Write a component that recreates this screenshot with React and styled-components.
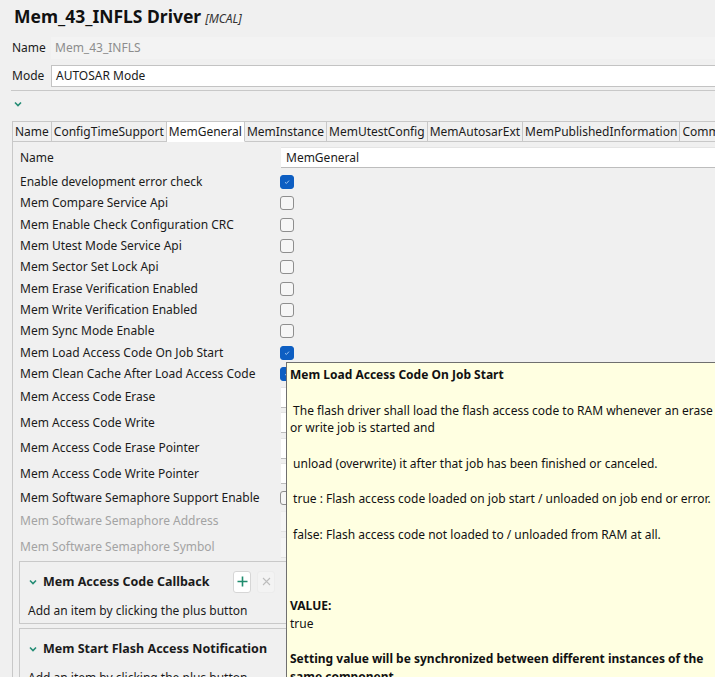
import React from "react";
import styled, { createGlobalStyle } from "styled-components";

const GlobalStyle = createGlobalStyle`
  html, body {
    margin: 0;
    padding: 0;
    background: #f0f0f0;
  }
  body {
    font-family: "Noto Sans", "Open Sans", sans-serif;
    font-size: 12px;
    color: #1b1b1b;
  }
`;

const tabs = [
  "Name",
  "ConfigTimeSupport",
  "MemGeneral",
  "MemInstance",
  "MemUtestConfig",
  "MemAutosarExt",
  "MemPublishedInformation",
  "Common",
];

const CHECK_H = 64 / 3;
const TEXT_H = 25.6;

const rows = [
  { label: "Name", kind: "name", value: "MemGeneral", h: 24 },
  { label: "Enable development error check", kind: "check", checked: true, h: CHECK_H },
  { label: "Mem Compare Service Api", kind: "check", h: CHECK_H },
  { label: "Mem Enable Check Configuration CRC", kind: "check", h: CHECK_H },
  { label: "Mem Utest Mode Service Api", kind: "check", h: CHECK_H },
  { label: "Mem Sector Set Lock Api", kind: "check", h: CHECK_H },
  { label: "Mem Erase Verification Enabled", kind: "check", h: CHECK_H },
  { label: "Mem Write Verification Enabled", kind: "check", h: CHECK_H },
  { label: "Mem Sync Mode Enable", kind: "check", h: CHECK_H },
  { label: "Mem Load Access Code On Job Start", kind: "check", checked: true, h: CHECK_H },
  { label: "Mem Clean Cache After Load Access Code", kind: "check", checked: true, h: CHECK_H },
  { label: "Mem Access Code Erase", kind: "text", h: TEXT_H },
  { label: "Mem Access Code Write", kind: "text", h: TEXT_H },
  { label: "Mem Access Code Erase Pointer", kind: "text", h: TEXT_H },
  { label: "Mem Access Code Write Pointer", kind: "text", h: TEXT_H },
  { label: "Mem Software Semaphore Support Enable", kind: "check", h: 22 },
  { label: "Mem Software Semaphore Address", kind: "text", disabled: true, h: TEXT_H },
  { label: "Mem Software Semaphore Symbol", kind: "text", disabled: true, h: TEXT_H },
];

const tipLines = [
  { text: "Mem Load Access Code On Job Start", bold: true },
  { text: "" },
  { text: " The flash driver shall load the flash access code to RAM whenever an erase" },
  { text: "or write job is started and" },
  { text: "" },
  { text: " unload (overwrite) it after that job has been finished or canceled." },
  { text: "" },
  { text: " true : Flash access code loaded on job start / unloaded on job end or error." },
  { text: "" },
  { text: " false: Flash access code not loaded to / unloaded from RAM at all." },
  { text: "" },
  { text: "" },
  { text: "" },
  { text: "VALUE:", bold: true },
  { text: "true" },
  { text: "" },
  { text: "Setting value will be synchronized between different instances of the", bold: true },
  { text: "same component.", bold: true },
];

const Page = styled.div`
  position: relative;
  width: 715px;
  height: 677px;
  overflow: hidden;
  background: #f0f0f0;
`;

const Header = styled.div`
  height: 37px;
  display: flex;
  align-items: baseline;
  gap: 4px;
  padding: 3px 0 0 14px;
  box-sizing: border-box;
`;

const Title = styled.h1`
  margin: 0;
  font-size: 17.5px;
  line-height: 26px;
  font-weight: 700;
  color: #111;
`;

const Tag = styled.span`
  font-size: 12px;
  font-style: italic;
  color: #333;
`;

const FieldRow = styled.div`
  display: grid;
  grid-template-columns: 39px 1fr;
  align-items: center;
  height: 22px;
  padding-left: 12px;
  margin-bottom: ${(p) => p.$gap || 0}px;
`;

const FieldLabel = styled.span`
  line-height: 22px;
`;

const ReadOnly = styled.div`
  height: 22px;
  line-height: 22px;
  padding-left: 4px;
  background: #f3f3f3;
  color: #8d8d8d;
`;

const ModeInput = styled.div`
  height: 22px;
  box-sizing: border-box;
  line-height: 20px;
  padding-left: 4px;
  background: #fff;
  border: 1px solid #c3c3c3;
  border-right: none;
`;

const Divider = styled.div`
  height: 1px;
  margin: 3px 0 0 11px;
  background: #c8c8c8;
`;

const Collapser = styled.div`
  height: 30px;
  padding: 10px 0 0 14px;
  box-sizing: border-box;
  display: flex;
  align-items: flex-start;
`;

const TabStrip = styled.div`
  display: flex;
  margin-left: 12px;
  height: 21px;
  white-space: nowrap;
`;

const Tab = styled.div`
  flex: none;
  padding: 0 2px;
  line-height: 19px;
  border: 1px solid #c8c8c8;
  border-left: ${(p) => (p.$first ? "1px solid #c8c8c8" : "none")};
  border-bottom-color: ${(p) => (p.$active ? "#fff" : "#c8c8c8")};
  background: ${(p) => (p.$active ? "#fff" : "#f0f0f0")};
`;

const TabPanel = styled.div`
  margin-left: 12px;
  border-left: 1px solid #c8c8c8;
  padding: 5px 0 0 7px;
`;

const Form = styled.div`
  display: flex;
  flex-direction: column;
`;

const Row = styled.div`
  display: grid;
  grid-template-columns: 261px 1fr;
  align-items: ${(p) => (p.$top ? "start" : "center")};
  height: ${(p) => p.$h}px;
`;

const Label = styled.span`
  line-height: 22px;
  white-space: nowrap;
  color: ${(p) => (p.$disabled ? "#a3a3a3" : "#1b1b1b")};
`;

const TextField = styled.div`
  height: 21px;
  box-sizing: border-box;
  line-height: 20px;
  padding-left: 5px;
  background: ${(p) => (p.$disabled ? "#f5f5f5" : "#fff")};
  border-top: 1px solid ${(p) => (p.$disabled ? "#ececec" : "#e4e4e4")};
  border-bottom: 1px solid ${(p) => (p.$disabled ? "#e2e2e2" : "#bdbdbd")};
`;

const Box = styled.span`
  display: inline-flex;
  align-items: center;
  justify-content: center;
  width: 14px;
  height: 14px;
  box-sizing: border-box;
  margin-left: -1px;
  border-radius: 3px;
  border: 1px solid ${(p) => (p.$checked ? "#0d5ec2" : "#8e8e8e")};
  background: ${(p) => (p.$checked ? "#0d5ec2" : "#f6f6f6")};
`;

const Section = styled.div`
  border: 1px solid #c9c9c9;
  border-right: none;
  margin: 1px 0 4px -1px;
  padding: 8px 0 4px 9px;
`;

const SectionHead = styled.div`
  display: flex;
  align-items: center;
  height: 24px;
  gap: 6px;
`;

const SectionTitle = styled.span`
  font-weight: 700;
  font-size: 12.5px;
  width: 184px;
  white-space: nowrap;
`;

const IconButton = styled.span`
  display: inline-flex;
  align-items: center;
  justify-content: center;
  width: 18px;
  height: 22px;
  box-sizing: border-box;
  border-radius: 3px;
  border: 1px solid ${(p) => (p.$disabled ? "#ececec" : "#d6d6d6")};
  background: ${(p) => (p.$disabled ? "#f3f3f3" : "#fff")};
`;

const Hint = styled.div`
  line-height: 16px;
  padding-top: 9px;
  margin-left: -1px;
`;

const Tooltip = styled.div`
  position: absolute;
  left: 286px;
  top: 362px;
  width: 460px;
  height: 340px;
  background: #ffffe1;
  border-left: 1px solid #6f6f6f;
  border-top: 1px solid #6f6f6f;
  padding: 3px 0 0 3px;
  box-sizing: border-box;
  color: #111;
`;

const TipLine = styled.div`
  height: 17.75px;
  line-height: 17.75px;
  white-space: pre;
  font-weight: ${(p) => (p.$bold ? 700 : 400)};
`;

function Chevron({ color = "#238c74" }) {
  return (
    <svg width="8" height="6" viewBox="0 0 8 6">
      <polyline points="1,1.5 4,4.5 7,1.5" fill="none" stroke={color} strokeWidth="1.6" />
    </svg>
  );
}

function Checkbox({ checked }) {
  return (
    <Box $checked={checked}>
      {checked && (
        <svg width="8" height="8" viewBox="0 0 8 8">
          <polyline points="2,4.2 3.4,5.5 6,2.6" fill="none" stroke="#9cc3f0" strokeWidth="1" />
        </svg>
      )}
    </Box>
  );
}

function FormRow({ row }) {
  let control = null;
  if (row.kind === "check") control = <Checkbox checked={row.checked} />;
  if (row.kind === "name") control = <TextField>{row.value}</TextField>;
  if (row.kind === "text") control = <TextField $disabled={row.disabled} />;
  return (
    <Row $h={row.h} $top={row.kind === "name"}>
      <Label $disabled={row.disabled}>{row.label}</Label>
      {control}
    </Row>
  );
}

function ListSection({ title, buttons }) {
  return (
    <Section>
      <SectionHead>
        <Chevron />
        <SectionTitle>{title}</SectionTitle>
        {buttons && (
          <>
            <IconButton>
              <svg width="11" height="11" viewBox="0 0 11 11">
                <path d="M5.5 0.5v10M0.5 5.5h10" stroke="#1f8c6e" strokeWidth="1.6" />
              </svg>
            </IconButton>
            <IconButton $disabled>
              <svg width="9" height="9" viewBox="0 0 9 9">
                <path d="M1 1l7 7M8 1l-7 7" stroke="#bdbdbd" strokeWidth="1.1" />
              </svg>
            </IconButton>
          </>
        )}
      </SectionHead>
      <Hint>Add an item by clicking the plus button</Hint>
    </Section>
  );
}

export default function App() {
  return (
    <Page>
      <GlobalStyle />
      <Header>
        <Title>Mem_43_INFLS Driver</Title>
        <Tag>[MCAL]</Tag>
      </Header>
      <FieldRow $gap={6}>
        <FieldLabel>Name</FieldLabel>
        <ReadOnly>Mem_43_INFLS</ReadOnly>
      </FieldRow>
      <FieldRow>
        <FieldLabel>Mode</FieldLabel>
        <ModeInput>AUTOSAR Mode</ModeInput>
      </FieldRow>
      <Divider />
      <Collapser>
        <Chevron />
      </Collapser>
      <TabStrip>
        {tabs.map((t, i) => (
          <Tab key={t} $first={i === 0} $active={t === "MemGeneral"}>
            {t}
          </Tab>
        ))}
      </TabStrip>
      <TabPanel>
        <Form>
          {rows.map((r) => (
            <FormRow key={r.label} row={r} />
          ))}
        </Form>
        <ListSection title="Mem Access Code Callback" buttons />
        <ListSection title="Mem Start Flash Access Notification" />
      </TabPanel>
      <Tooltip>
        {tipLines.map((l, i) => (
          <TipLine key={i} $bold={l.bold}>
            {l.text}
          </TipLine>
        ))}
      </Tooltip>
    </Page>
  );
}
